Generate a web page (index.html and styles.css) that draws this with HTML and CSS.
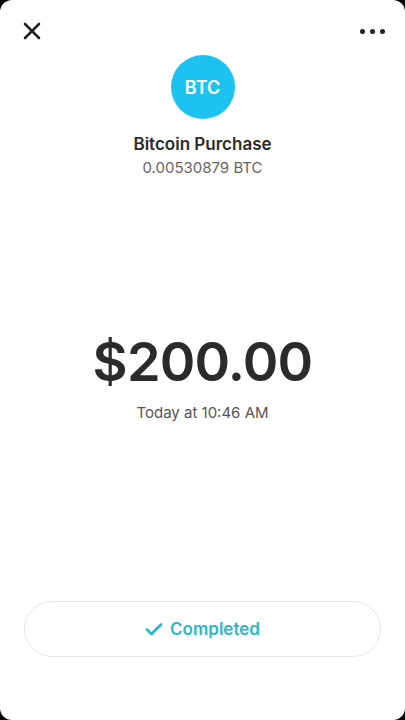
FILE: index.html
```html
<!DOCTYPE html>
<html>
<head>
    <title>Bitcoin Purchase</title>
    <link rel="stylesheet" href="styles.css">
</head>
<body>
    <div class="screen">
        <div class="topbar">
            <svg class="close" width="18" height="18" viewBox="0 0 18 18">
                <path d="M2 2 L16 16 M16 2 L2 16" stroke="#222" stroke-width="2.6" stroke-linecap="round"/>
            </svg>
            <div class="more">
                <span></span><span></span><span></span>
            </div>
        </div>

        <div class="header">
            <div class="avatar">BTC</div>
            <p class="title">Bitcoin Purchase</p>
            <p class="subtitle">0.00530879 BTC</p>
        </div>

        <div class="amount">
            <p class="value">$200.00</p>
            <p class="time">Today at 10:46 AM</p>
        </div>

        <div class="status">
            <svg class="check" width="18" height="14" viewBox="0 0 18 14">
                <path d="M2 7.5 L6.5 12 L16 2.5" fill="none" stroke="#2bb8cb" stroke-width="2.8" stroke-linecap="round" stroke-linejoin="round"/>
            </svg>
            <span>Completed</span>
        </div>
    </div>
</body>
</html>
```

FILE: styles.css
```css
body {
    margin: 0;
    background-color: #000;
    font-family: Inter, "Noto Sans", Arial, sans-serif;
}
p {
    margin: 0;
}
.screen {
    height: 720px;
    background-color: #fff;
    border-radius: 12px;
    display: flex;
    flex-direction: column;
    box-sizing: border-box;
}
.topbar {
    display: flex;
    justify-content: space-between;
    align-items: center;
    padding: 22px 20px 0 23px;
    height: 18px;
}
.more {
    display: flex;
    gap: 5px;
}
.more span {
    width: 5px;
    height: 5px;
    border-radius: 50%;
    background-color: #222;
}
.header {
    display: flex;
    flex-direction: column;
    align-items: center;
    margin-top: 15px;
}
.avatar {
    width: 64px;
    height: 64px;
    border-radius: 50%;
    background-color: #1dc3f0;
    color: #fff;
    font-size: 18px;
    font-weight: 600;
    display: flex;
    justify-content: center;
    align-items: center;
}
.title {
    margin-top: 15px;
    font-size: 17px;
    font-weight: 600;
    color: #2b2b2b;
}
.subtitle {
    margin-top: 4px;
    font-size: 15px;
    color: #666;
}
.amount {
    display: flex;
    flex-direction: column;
    align-items: center;
    margin-top: 153px;
}
.value {
    font-size: 54px;
    font-weight: 600;
    color: #2b2b2b;
    letter-spacing: -0.8px;
    line-height: 64px;
}
.time {
    margin-top: 9px;
    font-size: 15px;
    color: #555;
}
.status {
    margin: auto 24px 63px 24px;
    height: 54px;
    border: 1px solid #e6e6e6;
    border-radius: 28px;
    display: flex;
    justify-content: center;
    align-items: center;
    gap: 7px;
    color: #2bb8cb;
    font-size: 17px;
    font-weight: 600;
}
```
